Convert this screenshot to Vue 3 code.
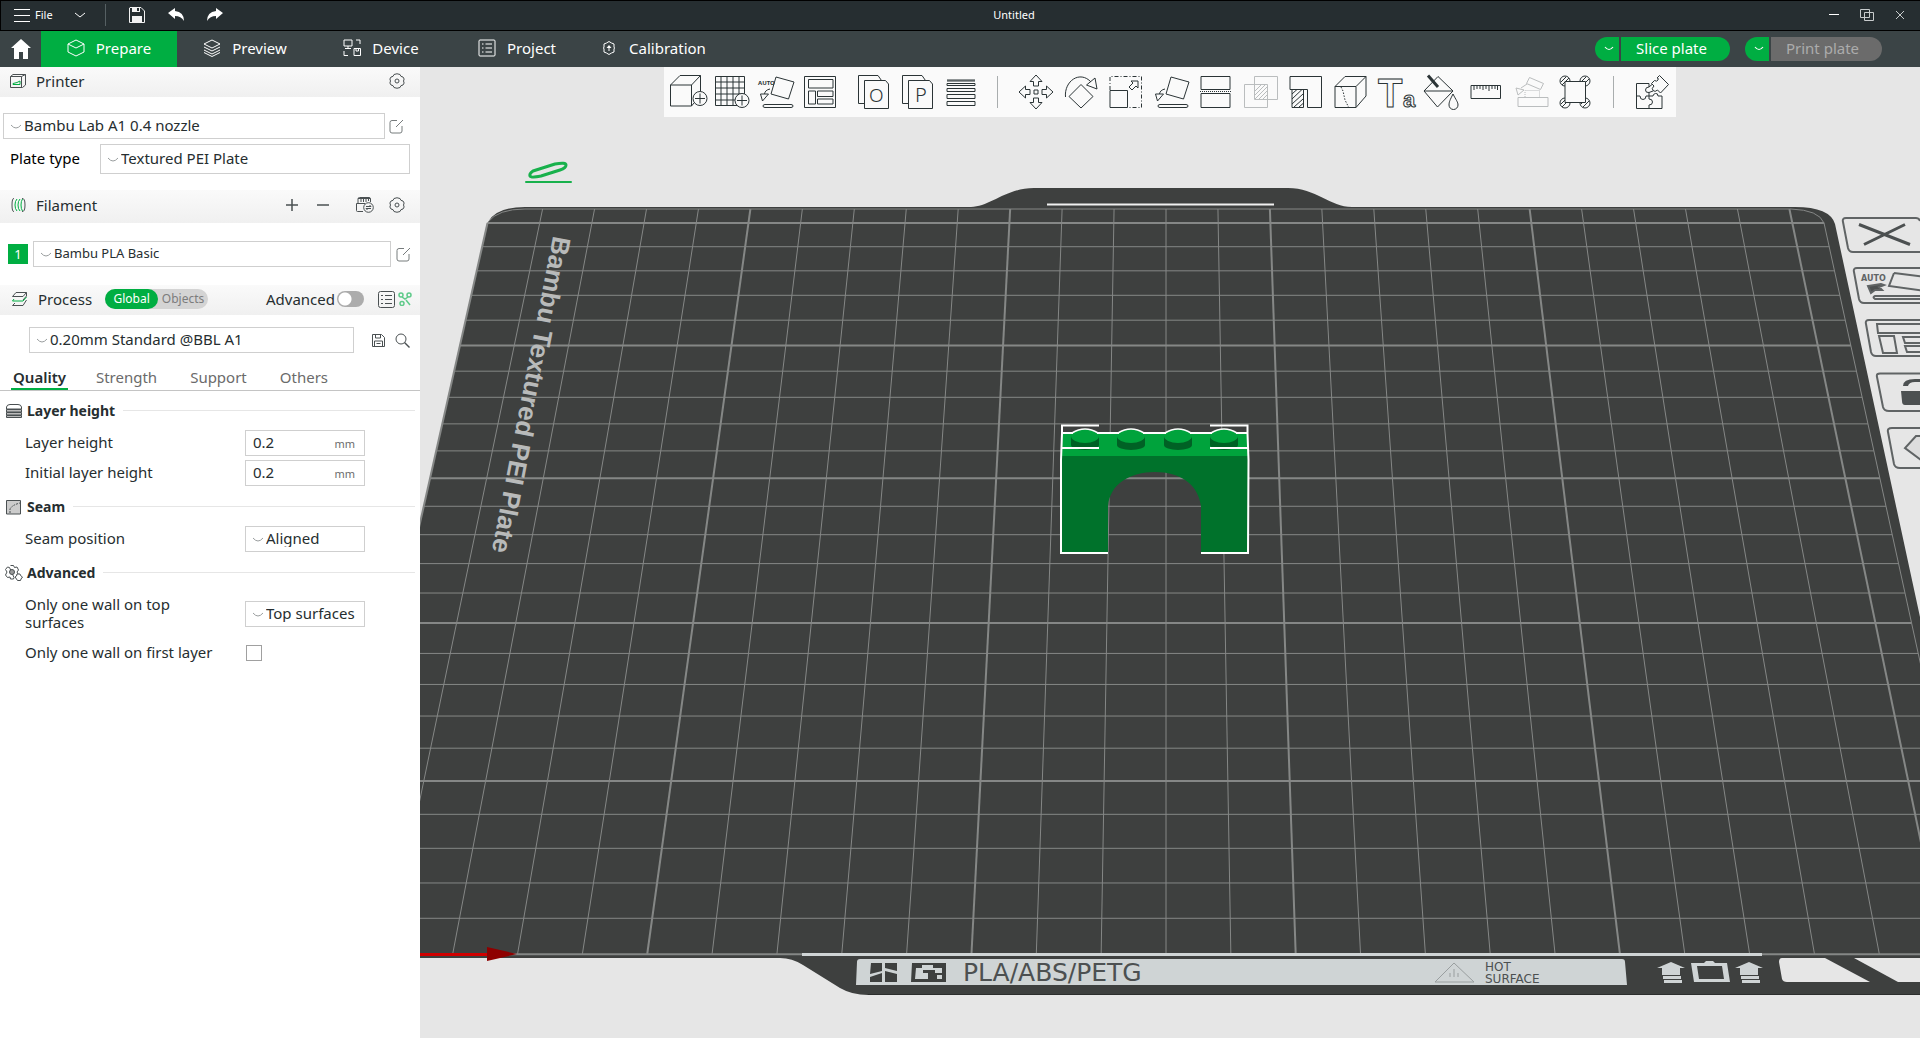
<script setup>
import { ref } from 'vue'

const navTabs = [
  { name: 'Prepare', parts: [{ d: 'M9 1L17 5V13L9 17L1 13V5ZM1 5L9 9L17 5' }] },
  { name: 'Preview', parts: [{ d: 'M9 1L17 5L9 9L1 5ZM1 8L9 12L17 8M1 11L9 15L17 11M1 13.5L9 17.5L17 13.5' }] },
  { name: 'Device', parts: [{ d: 'M1 1H9V7H1ZM5 7V9M2 9.5H8M13 1H17V5M1 12V16.5H5M11 9.5H17.5V16.5H11ZM13 9.5V12H15.5V9.5' }] },
  { name: 'Project', parts: [{ d: 'M2 1H16Q17 1 17 2V16Q17 17 16 17H2Q1 17 1 16V2Q1 1 2 1ZM7.500 5H14M7.500 9H14M7.500 13H14M4 5H5.500M4 9H5.500M4 13H5.500' }] },
  { name: 'Calibration', parts: [{ d: 'M9 2.500L11.500 4L14 5V8L14.500 9L14 10V13L11.500 14L9 15.500L6.500 14L4 13V10L3.500 9L4 8V5L6.500 4Z' }, { d: 'M9 6L11.500 9H9.500V12H8.500V9H6.500Z', fill: '#fff' }] },
]

const layFlat = 'M18 3L36 8L30.500 25L13 20ZM12 15Q7 16 6.500 20M2.500 20H10.500L4.500 27ZM7 30.500H33Q35 30.500 35 32T33 33.500H7Q5 33.500 5 32T7 30.500Z'
const plusBadge = (x, y) => `M${x - 7} ${y}A7 7 0 1 1 ${x + 7} ${y}A7 7 0 1 1 ${x - 7} ${y}M${x - 5} ${y}H${x + 5}M${x} ${y - 5}V${y + 5}`
const hatch = 'M4 20L9 15.500M4 25L14 15.500M4 30L15 20M6 33L15 25M11 33L15 29.500'
const pages = 'M10 29.500H4.500V1.500H24L27.500 6.500M10.500 6.500H31.500L34.500 10V34.500H10.500Z'

const toolGroups = [
  {
    wide: false,
    tools: [
      { name: 'Add', parts: [{ d: 'M.5 11H21.500V32H.5ZM.5 11L10 1.500H30.500L21.500 11M30.500 1.500V17M21.500 32L24 29' }, { d: plusBadge(30, 24.5), fill: '#fafafa' }] },
      { name: 'Add plate', parts: [{ d: 'M1.500 2.500H30.500V31.500H1.500ZM1.500 8H30.500M1.500 14H30.500M1.500 20H30.500M1.500 26H30.500M7 2.500V31.500M13 2.500V31.500M19 2.500V31.500M25 2.500V31.500' }, { d: plusBadge(28, 26.5), fill: '#fafafa' }] },
      { name: 'Auto orient', parts: [{ d: layFlat }], text: { t: 'AUTO', x: 0, y: 11, s: 6, w: 700 } },
      { name: 'Arrange', parts: [{ d: 'M2.500 2.500H33.500V33.500H2.500ZM6.500 5.500H31V14H6.500ZM6.500 17H13.500V30H6.500ZM15.500 17H31V22.500H15.500ZM15.500 25H31V30H15.500Z' }] },
    ],
  },
  {
    wide: false,
    tools: [
      { name: 'Split to objects', parts: [{ d: pages }], text: { t: 'O', x: 15, y: 28, s: 19, w: 300 } },
      { name: 'Split to parts', parts: [{ d: pages }], text: { t: 'P', x: 17, y: 28, s: 20, w: 300 } },
      { name: 'Variable layer height', parts: [{ d: 'M5 6H33M5 7H33M5 9.500H33V11.500H5ZM5 14.500H33V17.500H5ZM5 20.500H33V24.500H5ZM5 27.500H33V31.500H5Z' }] },
    ],
  },
  {
    wide: true,
    ruled: true,
    tools: [
      { name: 'Move', parts: [{ d: 'M18 1L24 7.500H20.500V12H15.500V7.500H12ZM18 35L24 28.500H20.500V24H15.500V28.500H12ZM1 18L7.500 12V15.500H12V20.500H7.500V24ZM35 18L28.500 12V15.500H24V20.500H28.500V24ZM16 16H20V20H16Z' }] },
      { name: 'Rotate', parts: [{ d: 'M2.500 23C1 7 17 -4 28 8M23.500 11L32 4L34 15ZM18 10.500L30 22.500L18 34L6 22.500Z' }] },
      { name: 'Scale', parts: [{ d: 'M2 16V2.500H33.500V33.500H20', dash: '4 2 1 2' }, { d: 'M2 16.500H19.500V33.500H2ZM21 13L25 9L23 7H30V14L28 12L24 16Z' }] },
      { name: 'Lay on face', parts: [{ d: layFlat }] },
      { name: 'Cut', parts: [{ d: 'M3 2.500H32V15.500H3ZM3 19.500H32V33.500H3Z' }, { d: 'M2 17.500H33', dash: '1 1' }] },
      { name: 'Mesh boolean', off: true, parts: [{ d: 'M1.500 10.500H24.500V33.500H1.500ZM11.500 2.500H34.500V25.500H11.500ZM12 17L18 11M12 21L22 11M12 25L24 13M16 25L24 17M20 25L24 21' }] },
      { name: 'Support painting', parts: [{ d: 'M2 2.500H33.500V33.500H19.500V15.500H2Z' }, { d: 'M4 15.500H15.500V33.500H4Z' + hatch }] },
      { name: 'Seam painting', parts: [{ d: 'M2 12.500H23V33.500H2ZM2 12.500L12 2.500H33L23 12.500M33 2.500V22L23 33.500' }, { d: 'M8 13L10 17L12 26L15.500 33', dash: '1.500 1.500' }] },
      { name: 'Text', parts: [], text: { t: 'T', x: 0, y: 33, s: 40, w: 700, hollow: true }, text2: { t: 'a', x: 25, y: 33, s: 22, w: 700 } },
      { name: 'Color painting', parts: [{ d: 'M15 2.500L30 17L14.500 33L1 17ZM1 17H30M30 20C27 26 26 28 26 31A4.500 4.500 0 0 0 35 31C35 28 33 26 30 20Z' }, { d: 'M5 1.500L15 13', bold: true }] },
      { name: 'Measure', parts: [{ d: 'M3 11.500H32.500V24.500H3ZM6 12V16M9 12V15M12 12V15M15 12V16M18 12V15M21 12V17M24 12V15M27 12V15M29.500 12V16' }] },
      { name: 'Assemble', off: true, parts: [{ d: 'M5 23.500H35V32.500H5ZM16.500 3.500L30.500 9.500L27.500 15.500L13.500 9.500ZM3 14L5 21L11 16ZM8 14L14 10' }, { d: 'M12 23V16.500H26.500V23', dash: '1 1' }] },
      { name: 'Brim ears', parts: [{ d: 'M2 7A5 5 0 1 1 12 7A5 5 0 1 1 2 7M22 7A5 5 0 1 1 32 7A5 5 0 1 1 22 7M2 29A5 5 0 1 1 12 29A5 5 0 1 1 2 29M22 29A5 5 0 1 1 32 29A5 5 0 1 1 22 29M3 8L8 3M4 11L11 4M23 8L28 3M25 11L31 5M3 30L8 25M4 33L11 26M23 30L28 25M25 33L31 27' }, { d: 'M7 7.500H27.500V28.500H7Z', fill: '#fafafa' }] },
    ],
  },
  {
    wide: true,
    ruled: true,
    tools: [
      { name: 'Assembly view', parts: [{ d: 'M15 9.500H2.500V34.500H28V22H24Q24 19 21.500 19.500T19 22H15V25Q18.500 25 18.500 28T15 31V34.500M2.500 22H6Q6 25.500 9 25.500T12 22H15V18.500Q11.500 19 11.500 16T15 13V9.500' }, { d: 'M25.500 1.500L34.500 10.500L26.500 19L23.500 16Q21 18.500 19 16.500T20 12L17.500 9.500L20.500 6.500Q23 8 24 6T23 4ZM15 13L18 10.500M15 18.500L19 17' }] },
    ],
  },
]

/* Build plate grid: columns fan out from x = 1166, rows shrink with distance. */
const step = (y) => 51.95 + 0.01731 * (y - 209)
const rowY = (j) => 209 + (1 / (0.01916 - 0.0001496 * j) - 51.95) / 0.01731
const colX = (k, y) => 1166 + k * step(y)
const columns = Array.from({ length: 26 }, (_, i) => i - 13).map((k) => {
  const top = k === -13 ? 223 : 209
  return { id: k, top, x1: colX(k, top), x2: colX(k, 954), bold: (k + 13) % 5 === 0 }
})
const rows = Array.from({ length: 26 }, (_, j) => {
  const y = rowY(j)
  return { id: j, y, x1: colX(-13, y), x2: colX(12.61, y), bold: j % 5 === 0 }
})
const studs = [1085, 1131, 1178, 1224]

const settingTabs = ['Quality', 'Strength', 'Support', 'Others']
const activeTab = ref('Quality')
const layerHeight = ref('0.2')
const initialLayerHeight = ref('0.2')
const advanced = ref(false)
const oneWallFirst = ref(false)

const gearPath = 'M5 1.500Q8 0 11 1.500Q11.500 4 14 4Q16 6 14.500 8Q16 10 14 12Q11.500 12 11 14.500Q8 16 5 14.500Q4.500 12 2 12Q0 10 1.500 8Q0 6 2 4Q4.500 4 5 1.500Z'
const editPath = 'M8 1.500H3Q1 1.500 1 3.500V12Q1 14 3 14H11Q13 14 13 12V7M7 8L14 1'
</script>

<template>
  <div class="app">
    <header class="titlebar">
      <div class="title-left">
        <button class="file"><svg width="16" height="16" viewBox="0 0 16 16"><path d="M0 2.500H16M0 8.500H16M0 14.500H16" /></svg>File</button>
        <button class="drop" aria-label="More menus"><svg width="12" height="8" viewBox="0 0 12 8"><path d="M1 2L6 6L11 2" /></svg></button>
        <span class="divider"></span>
        <button aria-label="Save"><svg width="16" height="16" viewBox="0 0 16 16"><path d="M1 .5H12L15.500 4V15.500H.5V1Z" stroke="#f2f2f2" /><path d="M3 0H11V5H3ZM3 9H13V16H3Z" fill="#f2f2f2" stroke="none" /><path d="M8 1H10V4H8Z" fill="#262e31" stroke="none" /></svg></button>
        <button aria-label="Undo"><svg width="16" height="16" viewBox="0 0 16 16"><path d="M0 6L7 1V4Q16 5 16 14Q13 9 7 9V12Z" fill="#fff" stroke="none" /></svg></button>
        <button aria-label="Redo"><svg width="16" height="16" viewBox="0 0 16 16"><path d="M16 6L9 1V4Q0 5 0 14Q3 9 9 9V12Z" fill="#fff" stroke="none" /></svg></button>
      </div>
      <div class="doc-title">Untitled</div>
      <div class="title-right">
        <button aria-label="Minimize"><svg width="16" height="16" viewBox="0 0 16 16"><path d="M3 7.500H13" /></svg></button>
        <button aria-label="Restore"><svg width="16" height="16" viewBox="0 0 16 16"><path d="M1.500 2.500H10.500V10.500H1.500ZM5.500 5.500H14.500V13.500H5.500Z" stroke="#c8cccd" /></svg></button>
        <button aria-label="Close"><svg width="16" height="16" viewBox="0 0 16 16"><path d="M4 4L12 12M12 4L4 12" stroke="#c8cccd" /></svg></button>
      </div>
    </header>

    <nav class="navbar">
      <button class="home" aria-label="Home"><svg width="20" height="20" viewBox="0 0 20 20"><path d="M10 0L20 9H17V20H12V13H8V20H3V9H0Z" fill="#fff" /></svg></button>
      <button v-for="(tab, i) in navTabs" :key="tab.name" class="tab" :class="{ on: i === 0 }">
        <svg width="18" height="18" viewBox="0 0 18 18"><path v-for="p in tab.parts" :key="p.d" :d="p.d" :fill="p.fill || 'none'" :stroke="p.fill ? 'none' : '#fff'" /></svg>{{ tab.name }}
      </button>
      <div class="actions">
        <div class="split">
          <button class="arrow" aria-label="Slice options"><svg width="10" height="6" viewBox="0 0 10 6"><path d="M1 1Q5 6 9 1" fill="none" stroke="#fff" stroke-width="1.200" /></svg></button>
          <button class="main">Slice plate</button>
        </div>
        <div class="split">
          <button class="arrow" aria-label="Print options"><svg width="10" height="6" viewBox="0 0 10 6"><path d="M1 1Q5 6 9 1" fill="none" stroke="#fff" stroke-width="1.200" /></svg></button>
          <button class="main idle">Print plate</button>
        </div>
      </div>
    </nav>

    <div class="body">
      <aside class="side">
        <div class="head">
          <svg width="18" height="16" viewBox="0 0 18 16"><path d="M1.500 3.500L4 1.500H16.500V12L13.500 14.500H1.500ZM1.500 3.500H12.500L16.500 1.500M12.500 3.500V14" /><path d="M4 11.500H11V8L8 9.500L4 10.500Z" class="g" /></svg>
          <h2>Printer</h2>
          <button class="push" aria-label="Printer settings"><svg width="16" height="16" viewBox="0 0 16 16"><path :d="gearPath" /><circle cx="8" cy="8" r="2" /></svg></button>
        </div>
        <div class="line printer">
          <div class="pick grow"><svg class="chev" width="10" height="6" viewBox="0 0 10 6"><path d="M0 1Q5 7 10 1" /></svg><select aria-label="Printer preset"><option>Bambu Lab A1 0.4 nozzle</option></select></div>
          <button aria-label="Edit printer"><svg width="15" height="15" viewBox="0 0 15 15"><path :d="editPath" class="grey" /></svg></button>
        </div>
        <div class="line plate">
          <label for="plate">Plate type</label>
          <div class="pick grow tall"><svg class="chev" width="10" height="6" viewBox="0 0 10 6"><path d="M0 1Q5 7 10 1" /></svg><select id="plate"><option>Textured PEI Plate</option></select></div>
        </div>

        <div class="head high">
          <svg width="18" height="16" viewBox="0 0 18 16"><path d="M5 1.500Q3 1 3 8T5 14.500M13 1.500Q16 1 16 8T13 14.500" /><path d="M8 2Q6 4 6 8T8 14M11 2Q9 4 9 8T11 14M13.500 2Q12 4 12 8T13.500 14" class="g" /></svg>
          <h2>Filament</h2>
          <button class="push" aria-label="Add filament"><svg width="14" height="14" viewBox="0 0 14 14"><path d="M1 7H13M7 1V13" stroke-width="1.500" /></svg></button>
          <button class="minus" aria-label="Remove filament"><svg width="14" height="14" viewBox="0 0 14 14"><path d="M1 7H13" stroke-width="1.500" /></svg></button>
          <button class="ams" aria-label="Sync filaments"><svg width="18" height="16" viewBox="0 0 18 16"><path d="M7 14.500H1.500Q.5 14.500 .5 13.500V6.500H2V2Q2 .5 3.500 .5H13Q14.500 .5 14.500 2V5M2 6.500H9M5 2V5M7.500 2V5M10 2V5M12.500 2V4M2 1.500H14" /><circle cx="12.500" cy="10.500" r="4.800" /><path d="M10 9.500H15L13.500 8M15 11.500H10L11.500 13" /></svg></button>
          <button class="gear" aria-label="Filament settings"><svg width="16" height="16" viewBox="0 0 16 16"><path :d="gearPath" /><circle cx="8" cy="8" r="2" /></svg></button>
        </div>
        <div class="line filament">
          <button class="badge">1</button>
          <div class="pick grow small"><svg class="chev" width="10" height="6" viewBox="0 0 10 6"><path d="M0 1Q5 7 10 1" /></svg><select aria-label="Filament preset"><option>Bambu PLA Basic</option></select></div>
          <button aria-label="Edit filament"><svg width="15" height="15" viewBox="0 0 15 15"><path :d="editPath" class="grey" /></svg></button>
        </div>

        <div class="head process">
          <svg width="18" height="16" viewBox="0 0 18 16"><path d="M5 1.500H15.500L12 5.500H1.500ZM15.500 1.500V5L12 9M15.500 9L12 14.500H1.500L4 12" /><path d="M3 8L1.500 10H12L15.500 6" class="g" /></svg>
          <h2>Process</h2>
          <div class="pill"><button class="on">Global</button><button>Objects</button></div>
          <label class="push adv">Advanced<input v-model="advanced" type="checkbox" class="switch" /></label>
          <button class="list" aria-label="Setting list"><svg width="17" height="17" viewBox="0 0 17 17"><path d="M2.500 .5H14.500Q16.500 .5 16.500 2.500V14.500Q16.500 16.500 14.500 16.500H2.500Q.5 16.500 .5 14.500V2.500Q.5 .5 2.500 .5ZM7 4.500H14M7 8.500H14M7 12.500H14M3 4.500H5M3 8.500H5M3 12.500H5" /></svg></button>
          <button aria-label="Compare presets"><svg width="14" height="14" viewBox="0 0 14 14"><g stroke="#5fca8a" stroke-width="1.500" fill="none"><circle cx="3" cy="3" r="2" /><circle cx="11" cy="3" r="2" /><circle cx="4" cy="11.500" r="2" /><path d="M4 5L7 7L10 5M8 8L12 13" /></g></svg></button>
        </div>
        <div class="line preset">
          <div class="pick grow"><svg class="chev" width="10" height="6" viewBox="0 0 10 6"><path d="M0 1Q5 7 10 1" /></svg><select aria-label="Process preset"><option>0.20mm Standard @BBL A1</option></select></div>
          <button class="save" aria-label="Save preset"><svg width="13" height="13" viewBox="0 0 13 13"><path d="M.5 .5H9.500L12.500 3.500V12.500H.5ZM3.500 .5V4H8.500V.5M2.500 12V7H10.500V12M4.500 9.500H8.500" /></svg></button>
          <button aria-label="Search settings"><svg width="15" height="15" viewBox="0 0 15 15"><circle cx="6" cy="6" r="5" /><path d="M9.500 9.500L14.500 14.500" stroke-width="1.400" /></svg></button>
        </div>

        <div class="tabs">
          <button v-for="t in settingTabs" :key="t" :class="{ on: t === activeTab }" @click="activeTab = t">{{ t }}</button>
        </div>

        <section>
          <h3><svg width="18" height="16" viewBox="0 0 18 16"><path d="M1.500 6V4Q2 1.500 5 1.500H13Q16 1.500 16.500 4V6Z" /><path d="M1.500 6.500H16.500V9H1.500ZM1.500 9.500H16.500V12H1.500ZM1.500 12.500H16.500V14.500H1.500Z" fill="#bbb" /></svg>Layer height</h3>
          <div class="row"><label for="lh">Layer height</label><div class="num"><input id="lh" v-model="layerHeight" /><span>mm</span></div></div>
          <div class="row next"><label for="ilh">Initial layer height</label><div class="num"><input id="ilh" v-model="initialLayerHeight" /><span>mm</span></div></div>
        </section>
        <section>
          <h3><svg width="18" height="16" viewBox="0 0 18 16"><path d="M1.500 1.500H15.500V15H1.500Z" fill="#ccc" /><path d="M5 14V10Q7 6 15 4" fill="none" stroke-dasharray="2 1" /></svg>Seam</h3>
          <div class="row"><label for="seam">Seam position</label><div class="pick"><svg class="chev" width="10" height="6" viewBox="0 0 10 6"><path d="M0 1Q5 7 10 1" /></svg><select id="seam"><option>Aligned</option></select></div></div>
        </section>
        <section>
          <h3><svg width="18" height="16" viewBox="0 0 18 16"><path d="M5.500 .5H8.500L9.500 2.500L12 2L13.500 5L12 7L13 9M9 12.500L8.500 14H5.500L5 12L2.500 12.500L.5 10L2 7L.5 4.500L2.500 2L4.500 2.500Z" /><circle cx="7" cy="7" r="2.500" fill="#999" /><path d="M12 9H15L15.500 10.500L17.500 12L16 14L15.500 15.500H12.500L11.500 14L10 12L11.500 11Z" fill="#fff" /></svg>Advanced</h3>
          <div class="row two"><label for="walls">Only one wall on top surfaces</label><div class="pick"><svg class="chev" width="10" height="6" viewBox="0 0 10 6"><path d="M0 1Q5 7 10 1" /></svg><select id="walls"><option>Top surfaces</option></select></div></div>
          <div class="row check"><label for="first">Only one wall on first layer</label><input id="first" v-model="oneWallFirst" type="checkbox" class="box" /></div>
        </section>
      </aside>

      <main class="scene">
        <svg class="view" viewBox="420 67 1500 971" preserveAspectRatio="xMidYMin slice">
          <!-- build plate -->
          <path fill="#3e403f" d="M488 222Q496 207 525 207H971C990 207 1006 188 1034 188H1288C1316 188 1330 207 1352 207H1795Q1830 207 1835 224L1925 640V995H868Q852 995 840 988L803 965Q792 958 780 958H322Z" />
          <path d="M868 994.500H1920" class="lip" />
          <g class="grid">
            <line v-for="c in columns" :key="'c' + c.id" :x1="c.x1" :y1="c.top" :x2="c.x2" y2="954" :class="{ bold: c.bold }" />
            <line v-for="r in rows" :key="'r' + r.id" :x1="r.x1" :y1="r.y" :x2="r.x2" :y2="r.y" :class="{ bold: r.bold }" />
            <path d="M488 222Q498 209 525 209H1791Q1819 210 1824 223L1984 954" />
          </g>
          <path d="M1047 204.500H1274" stroke="#f0f0f0" stroke-width="2" />
          <path d="M802 954.500H1762" stroke="#cfd4d5" stroke-width="3" />
          <text class="plate-name" transform="translate(562 237) rotate(101)">Bambu Textured PEI Plate</text>

          <!-- rename pen -->
          <g fill="none" stroke="#18b14c" stroke-width="3" stroke-linecap="round" stroke-linejoin="round">
            <path d="M533 171L555 164Q566 162 566 165T560 170L541 176Q531 178 530 176T533 171Z" /><path d="M526 182H571" stroke-width="2" />
          </g>

          <!-- axis -->
          <path d="M420 953H490V956H420Z" fill="#d00000" /><path d="M487 947L517 954L487 961Z" fill="#8e0000" />

          <!-- front label -->
          <path d="M860 959H1622Q1625 959 1625 962L1627 985H856L857 962Q857 959 860 959Z" fill="#cfd4d5" />
          <path d="M871 963H882V971L870 974ZM885 963H897V971L885 968ZM870 977L882 973V982H870ZM885 971L897 974V982H885ZM912 963H946V982H911Z" fill="#3e403f" />
          <path d="M916 968H922V965H933V968H942V973H935V970H923V973H928V979H915ZM937 975H942V979H937Z" fill="#cfd4d5" />
          <text x="963" y="981" class="stamp big">PLA/ABS/PETG</text>
          <path d="M1454 963L1474 982H1435ZM1450 977V973M1454 977V969M1458 977V973" fill="none" stroke="#999e9f" />
          <text x="1485" y="971" class="stamp">HOT</text>
          <text x="1485" y="983" class="stamp">SURFACE</text>
          <g fill="#cfd4d5">
            <path d="M1671 962L1685 968H1680V975H1662V968H1657ZM1663 976H1681V979H1663ZM1664 980H1682V983H1664Z" />
            <path d="M1749 962L1763 968H1758V975H1740V968H1735ZM1741 976H1759V979H1741ZM1742 980H1760V983H1742Z" />
            <path d="M1691 963H1704L1706 961H1713L1715 963H1727L1730 982H1694ZM1697 966L1699 979H1724L1722 966Z" fill-rule="evenodd" />
          </g>
          <path fill="#e6e6e6" d="M1782 958H1825L1870 982H1787Q1783 982 1782 979L1779 962Q1779 958 1782 958ZM1854 958H1920V982H1898Z" />

          <!-- plate buttons -->
          <g class="plate-buttons">
            <path d="M1846 218H1916Q1919 218 1920 221M1920 252H1853Q1849 252 1848 248L1843 222Q1842 218 1846 218" />
            <path d="M1859 224.500L1910 244.500M1905 224.500L1864 244.500" class="cross" />
            <path d="M1925 268H1857Q1853 268 1854 272L1859 299Q1860 303 1864 303H1925M1894 273L1925 277M1925 291L1889 286L1894 273M1925 296H1875Q1872 297 1875 299H1925" />
            <path d="M1881 284L1868 286L1871 293L1875 290L1882 290L1879 287L1884 285Z" fill="#4c5051" />
            <path d="M1925 320H1869Q1865 320 1866 324L1871 352Q1872 356 1876 356H1925M1925 324H1877L1878 333H1925M1879 336H1894L1897 353H1883ZM1925 337H1903L1905 343H1925M1925 346H1905L1907 352H1925" />
            <path d="M1925 373.500H1881Q1876 373 1877 377L1883 407Q1884 411 1889 411H1925" />
            <path d="M1901 391H1925V405H1905Q1902 405 1902 401ZM1903 386Q1903 379 1915 379H1925V382H1915Q1909 382 1908 386Z" fill="#4c5051" stroke="none" />
            <path d="M1925 428H1892Q1887 428 1888 432L1894 464Q1895 468 1900 468H1925" /><path d="M1925 436H1916L1905 448L1925 463" fill="#ddd" />
          </g>
          <text x="1861" y="281" class="auto">AUTO</text>

          <!-- arch brick -->
          <path d="M1061 456H1248V553H1201V506C1198 484 1180 472 1155 472S1110 484 1108 506V553H1061Z" fill="#00722b" />
          <path d="M1061 433H1248V456H1061Z" fill="#00a33c" />
          <g v-for="x in studs" :key="x">
            <path :d="`M${x - 14} 436V445A14 5 0 0 0 ${x + 14} 445V436Z`" fill="#006125" />
            <ellipse :cx="x" cy="436" rx="14" ry="7" fill="#00a33c" />
            <path :d="`M${x - 13} 433Q${x} 425 ${x + 13} 433`" fill="none" stroke="#fff" stroke-width="1.500" />
          </g>
          <path d="M1099 425.500H1062V433.500L1061 460V553H1108M1210 425.500H1247.500V433.500L1248.500 460L1248 553H1201M1061 448H1099M1210 448H1248M1061 433H1073M1097 433H1119M1143 433H1166M1190 433H1212M1236 433H1248" fill="none" stroke="#fff" stroke-width="2" />
        </svg>

        <div class="toolbar" role="toolbar">
          <div v-for="(g, i) in toolGroups" :key="i" class="group" :class="{ wide: g.wide, ruled: g.ruled, gap: i === 1 }">
            <button v-for="t in g.tools" :key="t.name" :aria-label="t.name" :class="{ off: t.off }">
              <svg width="36" height="36" viewBox="0 0 36 36">
                <path v-for="p in t.parts" :key="p.d" :d="p.d" :fill="p.fill || 'none'" :stroke-dasharray="p.dash" :stroke-width="p.bold ? 3 : 1" />
                <text v-if="t.text" :x="t.text.x" :y="t.text.y" :font-size="t.text.s" :font-weight="t.text.w" :class="{ hollow: t.text.hollow }">{{ t.text.t }}</text>
                <text v-if="t.text2" :x="t.text2.x" :y="t.text2.y" :font-size="t.text2.s" :font-weight="t.text2.w" class="hollow">{{ t.text2.t }}</text>
              </svg>
            </button>
          </div>
        </div>
      </main>
    </div>
  </div>
</template>

<style>
body { margin: 0; }
</style>

<style scoped>
* { box-sizing: border-box; }
.app { min-height: 100vh; display: flex; flex-direction: column; font: 15px/20px "Noto Sans", "Open Sans", sans-serif; color: #262e30; background: #fff; }
button { font: inherit; color: inherit; background: none; border: 0; padding: 0; display: flex; align-items: center; justify-content: center; }
svg { display: block; flex: none; }
h2, h3 { margin: 0; font-size: 15px; font-weight: 400; }

.titlebar { display: flex; align-items: center; height: 31px; padding-bottom: 1px; background: #262e31; border: 1px solid #000; border-width: 1px 0 1px 1px; color: #fff; font-size: 11px; }
.titlebar svg { fill: none; stroke: #fff; }
.title-left { display: flex; align-items: center; width: 235px; padding-left: 13px; }
.file { gap: 5px; }
.title-left .drop { margin-left: 21px; }
.divider { width: 1px; height: 22px; background: #566063; margin: 0 23px 0 19px; }
.title-left button + button { margin-left: 23px; }
.title-left .file + .drop { margin-left: 21px; }
.doc-title { flex: 1; text-align: center; font-size: 11px; }
.title-right { display: flex; gap: 17px; width: 128px; padding-left: 34px; }

.navbar { display: flex; height: 36px; background: #3b4446; color: #fff; }
.home { width: 41px; }
.tab { width: 136px; gap: 11px; padding-bottom: 2px; }
.tab.on { background: #00ae42; }
.actions { margin-left: auto; display: flex; align-items: center; gap: 15px; padding-right: 38px; }
.split { display: flex; gap: 2px; height: 24px; }
.arrow { width: 24px; padding-left: 4px; background: #00ae42; border-radius: 12px 0 0 12px; }
.main { width: 109px; padding: 0 8px 2px 0; background: #00ae42; border-radius: 0 12px 12px 0; }
.main.idle { width: 111px; background: #6b6b6b; color: #acacac; }

.body { flex: 1; display: flex; }
.side { width: 420px; flex: none; background: #fff; }
.side svg { fill: none; stroke: #4a5052; stroke-width: 1; }
.side .g { stroke: #00ae42; }
.side .grey { stroke: #777c7d; }
.head { display: flex; align-items: center; height: 30px; padding: 0 15px 3px 9px; background: linear-gradient(#fafafa, #f0f0f0); }
.head h2 { margin-left: 9px; }
.high { height: 33px; margin-top: 16px; }
.push { margin-left: auto; }
.minus { margin-left: 17px; }
.ams { margin-left: 26px; }
.gear { margin-left: 15px; }
.process { padding: 0 8px 2px 11px; margin-top: 18px; }
.pill { display: flex; height: 20px; margin-left: 13px; border-radius: 10px; background: #d4d4d4; font-size: 12px; color: #7c7c7c; }
.pill button { width: 50px; }
.pill .on { width: 53px; border-radius: 10px; background: #00ae42; color: #fff; }
.adv { display: flex; align-items: center; gap: 2px; }
.switch { appearance: none; width: 27px; height: 16px; margin: 0; border-radius: 8px; background: radial-gradient(circle at 8px 8px, #fff 6px, #acacac 7px); }
.switch:checked { background: radial-gradient(circle at 19px 8px, #fff 6px, #00ae42 7px); }
.list { margin: 0 3px 0 14px; }
.line { display: flex; align-items: center; }
.printer { padding: 0 16px 0 3px; margin-top: 16px; gap: 4px; }
.plate { padding: 0 10px; margin-top: 5px; color: #000; }
.plate label { width: 90px; padding-bottom: 3px; }
.filament { margin-top: 18px; padding: 0 9px 0 8px; gap: 5px; }
.badge { width: 20px; height: 20px; background: #00ae42; color: #fff; font-size: 13px; }
.preset { margin-top: 12px; padding: 0 10px 0 29px; }
.save { margin: 0 10px 0 18px; }
.pick { position: relative; width: 120px; height: 26px; }
.pick.grow { width: auto; flex: 1; }
.pick.tall { height: 30px; }
.pick select { appearance: none; width: 100%; height: 100%; padding: 0 0 2px 20px; border: 1px solid #cfcfcf; border-radius: 0; background: #fff; font: inherit; color: #262e30; }
.pick.small select { font-size: 13px; }
.chev { position: absolute; left: 8px; top: 50%; margin-top: -2px; }
.side .chev { stroke: #9a9e9f; }

.tabs { display: flex; height: 38px; padding: 0 11px; gap: 27px; border-bottom: 1px solid #c4c4c4; color: #6b6b6b; }
.tabs button { height: 37px; padding: 13px 3px 0; border-bottom: 2px solid transparent; }
.tabs .on { margin-right: -2px; padding: 13px 2px 0; font-weight: 600; color: #262e30; border-color: #00ae42; }

section { padding-bottom: 1px; }
h3 { display: flex; align-items: center; height: 39px; padding: 0 5px; gap: 4px; font-size: 14px; font-weight: 700; }
h3::after { content: ""; flex: 1; height: 1px; margin-left: 4px; background: #e6e6e6; }
.row { display: flex; align-items: center; min-height: 26px; padding-left: 25px; line-height: 18px; }
.row label { width: 190px; margin-right: 30px; padding-bottom: 2px; }
.next { margin-top: 4px; }
.two { margin-top: 3px; }
.two label { width: 170px; margin-right: 50px; }
.check { margin-top: 7px; }
.num { display: flex; align-items: center; width: 120px; height: 26px; padding: 0 9px 2px 7px; border: 1px solid #cfcfcf; }
.num input { flex: 1; min-width: 0; border: 0; padding: 0; font: inherit; color: inherit; }
.num span { font-size: 11px; color: #6b6b6b; padding-top: 4px; }
.box { appearance: none; width: 16px; height: 16px; margin: 0 0 0 1px; border: 1px solid #a0a0a0; background: #fff; }
.box:checked { background: #00ae42; }

.scene { position: relative; flex: 1; min-width: 0; overflow: hidden; background: #e6e6e6; }
.view { position: absolute; inset: 0; width: 100%; height: 100%; }
.grid { fill: none; stroke: #858786; stroke-width: 1; }
.grid .bold { stroke-width: 2; }
.lip { stroke: #2c2e2d; }
.plate-name { font: bold 26px "Liberation Sans Narrow", "Liberation Sans", sans-serif; fill: #b8baba; dominant-baseline: central; }
.stamp { font: 12px "DejaVu Sans", sans-serif; fill: #4c5051; }
.stamp.big { font-size: 25px; }
.plate-buttons { fill: none; stroke: #606465; stroke-width: 2; }
.plate-buttons .cross { stroke: #4c5051; stroke-width: 3; }
.auto { font: bold 8px "DejaVu Sans", sans-serif; fill: #606465; }

.toolbar { position: relative; display: flex; width: max-content; height: 50px; margin: 0 auto; padding: 0 2px; background: #fafafa; }
.group { display: flex; }
.group button { width: 44px; height: 50px; }
.group.wide button { width: 45px; }
.group.gap { margin-left: 8px; }
.group.ruled::before { content: ""; width: 1px; height: 32px; margin: 9px 15px; background: #a9adae; }
.toolbar svg { stroke: #2b3436; overflow: visible; font-family: "Noto Sans", sans-serif; }
.toolbar text { fill: #2b3436; stroke: none; }
.toolbar .hollow { fill: #fafafa; stroke: #2b3436; font-family: "Liberation Sans", sans-serif; }
.off { opacity: .3; }
</style>
